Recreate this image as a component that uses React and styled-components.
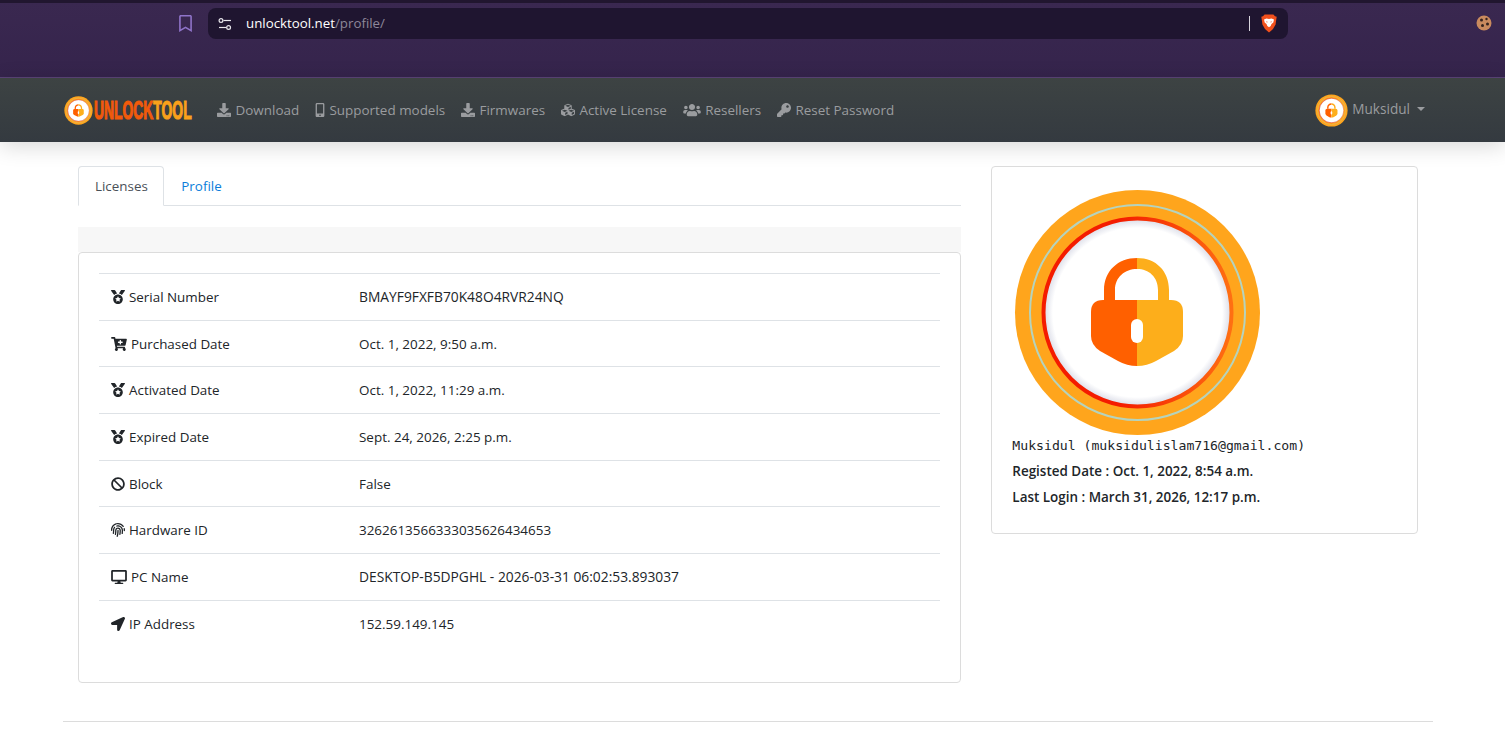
import React from 'react';
import styled, { createGlobalStyle } from 'styled-components';
import {
  FaDownload, FaMobileAlt, FaCubes, FaUsers, FaKey, FaMedal, FaCartPlus,
  FaBan, FaFingerprint, FaDesktop, FaLocationArrow, FaRegBookmark,
} from 'react-icons/fa';

const GlobalStyle = createGlobalStyle`
  html, body {
    margin: 0;
    background: #fff;
    overflow: hidden;
  }
  body {
    font-family: "Open Sans", "Noto Sans", sans-serif;
    font-size: 13.4px;
    color: #212529;
  }
`;

const navItems = [
  { icon: FaDownload, label: 'Download', iconWidth: 14 },
  { icon: FaMobileAlt, label: 'Supported models', iconWidth: 10 },
  { icon: FaDownload, label: 'Firmwares', iconWidth: 14 },
  { icon: FaCubes, label: 'Active License', iconWidth: 14 },
  { icon: FaUsers, label: 'Resellers', iconWidth: 18 },
  { icon: FaKey, label: 'Reset Password', iconWidth: 14 },
];

const licenseRows = [
  { icon: FaMedal, iconWidth: 14, label: 'Serial Number', value: 'BMAYF9FXFB70K48O4RVR24NQ', wide: true },
  { icon: FaCartPlus, iconWidth: 16, label: 'Purchased Date', value: 'Oct. 1, 2022, 9:50 a.m.' },
  { icon: FaMedal, iconWidth: 14, label: 'Activated Date', value: 'Oct. 1, 2022, 11:29 a.m.' },
  { icon: FaMedal, iconWidth: 14, label: 'Expired Date', value: 'Sept. 24, 2026, 2:25 p.m.' },
  { icon: FaBan, iconWidth: 14, label: 'Block', value: 'False' },
  { icon: FaFingerprint, iconWidth: 14, label: 'Hardware ID', value: '3262613566333035626434653' },
  { icon: FaDesktop, iconWidth: 16, label: 'PC Name', value: 'DESKTOP-B5DPGHL - 2026-03-31 06:02:53.893037', wide: true },
  { icon: FaLocationArrow, iconWidth: 14, label: 'IP Address', value: '152.59.149.145' },
];

const LockBadge = ({ size }) => (
  <svg width={size} height={size} viewBox="-3 -3 251 251">
    <defs>
      <radialGradient id="badgeFace" cx="0.5" cy="0.5" r="0.5">
        <stop offset="0.9" stopColor="#fff" />
        <stop offset="1" stopColor="#d8dae6" />
      </radialGradient>
      <linearGradient id="badgeRim" x1="0" y1="0" x2="1" y2="0">
        <stop offset="0.4" stopColor="#f41c00" />
        <stop offset="1" stopColor="#ff6f12" />
      </linearGradient>
    </defs>
    <circle cx="122.5" cy="122.5" r="122.5" fill="#ffa51c" />
    <circle cx="122.5" cy="122.5" r="107.5" fill="none" stroke="#b5d3bd" strokeWidth="2" />
    <circle cx="122.5" cy="122.5" r="94" fill="url(#badgeFace)" stroke="url(#badgeRim)" strokeWidth="4" />
    <path d="M122 68 C103 68 89 81 89 100 V110 H100 V100 C100 87 110 79 122 79 Z" fill="#ff6000" />
    <path d="M122 68 C141 68 154 81 154 100 V110 H143 V100 C143 87 134 79 122 79 Z" fill="#fdae1b" />
    <path d="M122 110 H88 Q76 110 76 122 V146 Q76 155 85 161 L103 171 Q112 176 122 176 Z" fill="#ff6000" />
    <path d="M122 110 H156 Q168 110 168 122 V146 Q168 155 159 161 L141 171 Q132 176 122 176 Z" fill="#fdae1b" />
    <rect x="116" y="129" width="12" height="24" rx="6" fill="#fff" />
  </svg>
);

const TuneIcon = () => (
  <svg width="14" height="14" viewBox="0 0 14 14" fill="none" stroke="#e8e6ec" strokeWidth="1.2">
    <circle cx="3" cy="3.5" r="1.9" />
    <path d="M5.5 3.5H13" />
    <circle cx="10.6" cy="10.5" r="1.9" />
    <path d="M1 10.5H8.2" />
  </svg>
);

const BraveIcon = () => (
  <svg width="16" height="19" viewBox="0 0 16 19">
    <path d="M3.6 0.5H12.4L14 2.3 15.7 2.8 15 7.2 14.6 10.6 12 15 8 18.5 4 15 1.4 10.6 1 7.2 0.3 2.8 2 2.3Z" fill="#f1501c" />
    <path d="M3 5.5 5.5 4.5 8 5 10.5 4.5 13 5.5 12.3 8.4 10.5 10 9.7 12 8 13.3 6.3 12 5.5 10 3.7 8.4Z" fill="#fff" />
    <path d="M5 7.2 7 8 5.8 8.6ZM11 7.2 9 8 10.2 8.6Z" fill="#f1501c" />
  </svg>
);

const CookieIcon = () => (
  <svg width="16" height="16" viewBox="0 0 16 16">
    <circle cx="8" cy="8" r="7.5" fill="#c98a5e" />
    <circle cx="5.5" cy="5" r="1.5" fill="#35231f" />
    <circle cx="10.5" cy="4" r="1.2" fill="#35231f" />
    <circle cx="11.5" cy="9" r="1.5" fill="#35231f" />
    <circle cx="6.5" cy="10.5" r="1.5" fill="#35231f" />
  </svg>
);

const App = () => (
  <>
    <GlobalStyle />
    <BrowserBar>
      <BookmarkButton><FaRegBookmark /></BookmarkButton>
      <AddressBar>
        <TuneIcon />
        <Url>unlocktool.net<UrlPath>/profile/</UrlPath></Url>
        <AddressDivider />
        <BraveIcon />
      </AddressBar>
      <ExtensionSlot><CookieIcon /></ExtensionSlot>
    </BrowserBar>

    <Navbar>
      <Brand>
        <LockBadge size={29} />
        <BrandText>UNLOCK<BrandAccent>TOOL</BrandAccent></BrandText>
      </Brand>
      <NavList>
        {navItems.map(({ icon: Icon, label, iconWidth }) => (
          <NavLink key={label} $iconWidth={iconWidth}><Icon />{label}</NavLink>
        ))}
      </NavList>
      <UserMenu>
        <LockBadge size={33} />
        <UserName>Muksidul</UserName>
        <Caret />
      </UserMenu>
    </Navbar>

    <Page>
      <Row>
        <MainColumn>
          <Tabs>
            <Tab $active>Licenses</Tab>
            <Tab>Profile</Tab>
          </Tabs>
          <CardHeader />
          <LicenseCard>
            <LicenseTable>
              {licenseRows.map(({ icon: Icon, iconWidth, label, value, wide }) => (
                <LicenseRow key={label}>
                  <RowLabel $iconWidth={iconWidth}><Icon />{label}</RowLabel>
                  <RowValue $wide={wide}>{value}</RowValue>
                </LicenseRow>
              ))}
            </LicenseTable>
          </LicenseCard>
        </MainColumn>
        <SideColumn>
          <ProfileCard>
            <LockBadge size={251} />
            <ProfileName>Muksidul (muksidulislam716@gmail.com)</ProfileName>
            <ProfileMeta>Registed Date : Oct. 1, 2022, 8:54 a.m.</ProfileMeta>
            <ProfileMeta>Last Login : March 31, 2026, 12:17 p.m.</ProfileMeta>
          </ProfileCard>
        </SideColumn>
      </Row>
      <Rule />
    </Page>
  </>
);

const BrowserBar = styled.div`
  height: 74px;
  border-top: 3px solid #21162f;
  border-bottom: 1px solid #5b4478;
  background: linear-gradient(#3a2850, #35244c);
  display: flex;
  align-items: flex-start;
`;

const BookmarkButton = styled.div`
  margin: 12px 14px 0 177px;
  color: #8f74c9;
  font-size: 17px;
  line-height: 17px;
  height: 17px;
`;

const AddressBar = styled.div`
  width: 1059px;
  height: 31px;
  margin-top: 5px;
  padding: 0 11px 0 10px;
  border-radius: 8px;
  background: #1f1530;
  display: flex;
  align-items: center;
`;

const Url = styled.div`
  flex: 1;
  margin: 0 0 2px 14px;
  font-size: 13.3px;
  color: #fff;
`;

const UrlPath = styled.span`
  color: #8d8799;
`;

const AddressDivider = styled.div`
  width: 1px;
  height: 15px;
  margin-right: 11px;
  background: #d8d5dd;
`;

const ExtensionSlot = styled.div`
  margin: 12px 0 0 188px;
  height: 16px;
`;

const Navbar = styled.nav`
  height: 64px;
  padding: 0 80px 0 64px;
  background: linear-gradient(#3d4343, #343a40);
  box-shadow: 0 4px 22px rgba(0, 0, 0, 0.16);
  display: flex;
  align-items: center;

  svg {
    flex: none;
  }
`;

const Brand = styled.div`
  width: 153px;
  flex: none;
  display: flex;
  align-items: center;
  gap: 1px;
`;

const BrandText = styled.span`
  flex: none;
  display: inline-block;
  font-family: "Liberation Sans", sans-serif;
  font-size: 25px;
  font-weight: 700;
  white-space: nowrap;
  color: #f15a0b;
  -webkit-text-stroke: 1.2px currentColor;
  transform: scaleX(0.555);
  transform-origin: left center;
`;

const BrandAccent = styled.span`
  color: #f9a11b;
`;

const NavList = styled.div`
  flex: 1;
  display: flex;
  gap: 15.8px;
`;

const NavLink = styled.a`
  display: flex;
  align-items: center;
  gap: 4.5px;
  color: #9a9c9f;
  font-size: 13.45px;

  svg {
    height: 14px;
    width: ${({ $iconWidth }) => $iconWidth}px;
  }
`;

const UserMenu = styled.div`
  display: flex;
  align-items: center;
  color: #9a9c9f;
`;

const UserName = styled.span`
  margin: 0 0 3px 4px;
  font-size: 13.6px;
`;

const Caret = styled.span`
  margin: 0 0 3px 7px;
  border-top: 4px solid #9a9c9f;
  border-left: 4px solid transparent;
  border-right: 4px solid transparent;
`;

const Page = styled.main`
  padding: 24px 72px 0 63px;
`;

const Row = styled.div`
  display: grid;
  grid-template-columns: 2fr 1fr;
`;

const MainColumn = styled.section`
  padding: 0 15px;
`;

const SideColumn = styled.aside`
  padding: 0 15px;
`;

const Tabs = styled.div`
  height: 40px;
  box-sizing: border-box;
  display: flex;
  border-bottom: 1px solid #dee2e6;
`;

const Tab = styled.div`
  height: 40px;
  padding: 0 15.5px 0 16px;
  box-sizing: border-box;
  display: flex;
  align-items: center;
  border: 1px solid ${({ $active }) => ($active ? '#dee2e6' : 'transparent')};
  border-bottom-color: ${({ $active }) => ($active ? '#fff' : 'transparent')};
  border-radius: 4px 4px 0 0;
  color: ${({ $active }) => ($active ? '#495057' : '#0b7dda')};
`;

const CardHeader = styled.div`
  height: 25px;
  margin-top: 21px;
  background: #f7f7f7;
`;

const LicenseCard = styled.div`
  height: 431px;
  box-sizing: border-box;
  padding: 20px;
  border: 1px solid #dcdcdc;
  border-radius: 4px;
`;

const LicenseTable = styled.div`
  display: flex;
  flex-direction: column;
`;

const LicenseRow = styled.div`
  height: 46.7px;
  box-sizing: border-box;
  padding: 0 12px;
  border-top: 1px solid #dee2e6;
  display: flex;
  align-items: center;
`;

const RowLabel = styled.div`
  width: 248px;
  display: flex;
  align-items: center;
  gap: 4px;

  svg {
    height: 14px;
    width: ${({ $iconWidth }) => $iconWidth}px;
  }
`;

const RowValue = styled.div`
  font-size: ${({ $wide }) => ($wide ? '13.8px' : '13.45px')};
`;

const ProfileCard = styled.div`
  height: 368px;
  box-sizing: border-box;
  padding: 20px;
  border: 1px solid #dcdcdc;
  border-radius: 4px;

  svg {
    display: block;
  }
`;

const ProfileName = styled.div`
  margin: -1px 0 7px;
  font-family: "DejaVu Sans Mono", monospace;
  font-size: 13.15px;
  line-height: 17px;
`;

const ProfileMeta = styled.div`
  margin-top: 5px;
  font-size: 13.45px;
  font-weight: 600;
  line-height: 21px;
`;

const Rule = styled.hr`
  margin: 38px 0 0;
  border: 0;
  border-top: 1px solid #dcdcdc;
`;

export default App;
